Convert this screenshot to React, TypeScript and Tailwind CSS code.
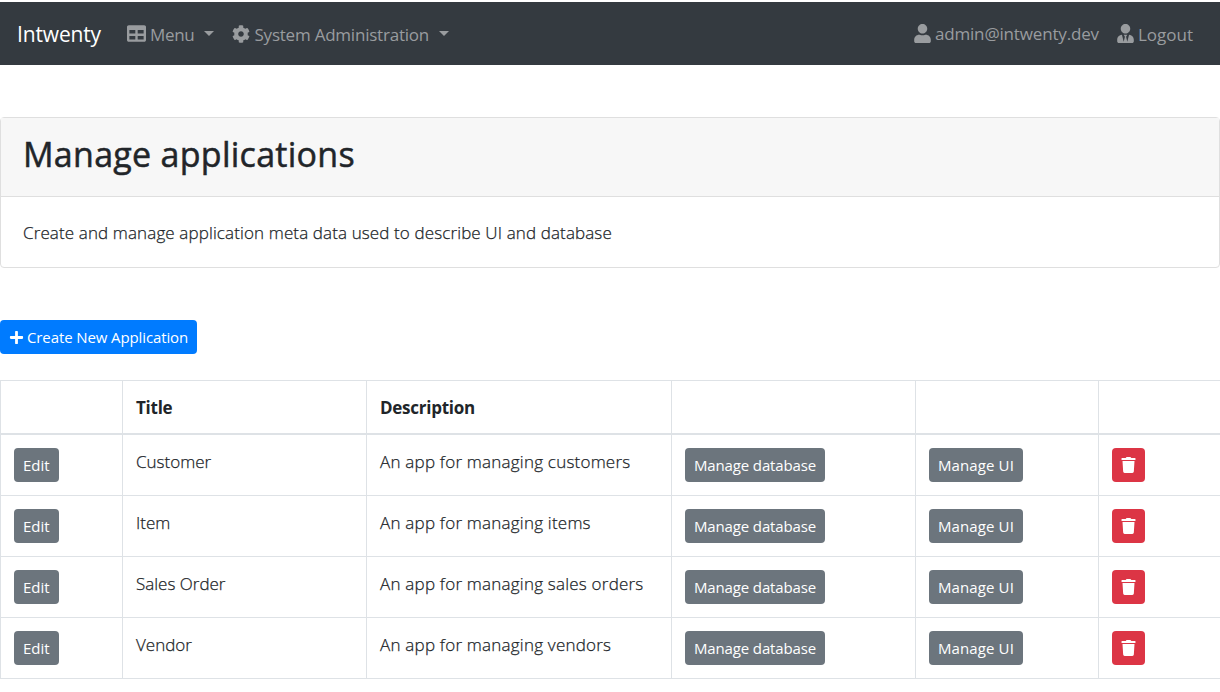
import { FaTable, FaCog, FaUser, FaUserTie, FaPlus, FaTrash } from 'react-icons/fa';

const apps = [
  { title: 'Customer', description: 'An app for managing customers' },
  { title: 'Item', description: 'An app for managing items' },
  { title: 'Sales Order', description: 'An app for managing sales orders' },
  { title: 'Vendor', description: 'An app for managing vendors' },
];

const button = 'flex h-[34px] items-center rounded-[4px] px-[9px] text-[15px] leading-[24px] text-white';
const secondary = 'bg-[#6c757d]';
const columns = 'grid grid-cols-[122px_244px_305px_244px_183px_122px] border-[#dee2e6]';
const cell = 'border-l border-[#dee2e6] px-[13px]';
const body = 'font-light [-webkit-text-stroke:0.25px_#212529]';

function Caret() {
  return <span className="ml-[10px] border-x-[5px] border-t-[5px] border-x-transparent border-t-[#999c9f]" />;
}

export default function App() {
  return (
    <div className="h-[692px] w-[1220px] overflow-hidden bg-white pt-[2px] font-['Open_Sans','Noto_Sans',sans-serif] text-[17px] text-[#212529]">
      <nav className="flex h-[63px] items-center bg-[#343a40] pl-[17px] pr-[27px] text-[#999c9f]">
        <a className="pt-[2px] text-[21px] tracking-[-0.15px] text-white">Intwenty</a>
        <a className="ml-[26px] flex items-center">
          <FaTable className="mr-[4px] size-[19px]" />
          <span className="pt-[2px] tracking-[-0.3px]">Menu</span>
          <Caret />
        </a>
        <a className="ml-[18px] flex items-center">
          <FaCog className="mr-[4px] size-[18px]" />
          <span className="pt-[2px] tracking-[-0.22px]">System Administration</span>
          <Caret />
        </a>
        <a className="ml-auto flex items-center">
          <FaUser className="mr-[4px] h-[19px] w-[17px]" />
          <span className="tracking-[-0.16px]">admin@intwenty.dev</span>
        </a>
        <a className="ml-[18px] flex items-center">
          <FaUserTie className="mr-[4px] h-[19px] w-[17px]" />
          <span className="pt-[2px]">Logout</span>
        </a>
      </nav>

      <section className="mt-[52px] h-[151px] rounded-[4px] border border-[#dfdfdf]">
        <header className="h-[79px] border-b border-[#dfdfdf] bg-[#f7f7f7] pl-[22px] pt-[12px]">
          <h1 className="text-[34px] leading-[48px] tracking-[0.28px] [-webkit-text-stroke:0.5px_#212529]">Manage applications</h1>
        </header>
        <p className={`${body} pl-[22px] pt-[23px] leading-[26px] tracking-[0.12px]`}>
          Create and manage application meta data used to describe UI and database
        </p>
      </section>

      <div className="mt-[52px] flex">
        <button className={`${button} bg-[#007bff]`}>
          <FaPlus className="mr-[3px] size-[15px]" />
          <span className="tracking-[-0.11px]">Create New Application</span>
        </button>
      </div>

      <div className="mt-[26px]">
        <div className={`${columns} h-[55px] border-b-2 border-t font-bold leading-[53px] tracking-[-0.26px]`}>
          <div className={cell} />
          <div className={cell}>Title</div>
          <div className={cell}>Description</div>
          <div className={cell} />
          <div className={cell} />
          <div className={cell} />
        </div>
        {apps.map((app) => (
          <div key={app.title} className={`${columns} h-[61px] border-b leading-[26px]`}>
            <div className={`${cell} flex pt-[13px]`}>
              <button className={`${button} ${secondary}`}>Edit</button>
            </div>
            <div className={`${cell} ${body} pt-[14px]`}>{app.title}</div>
            <div className={`${cell} ${body} pt-[14px] tracking-[0.22px]`}>{app.description}</div>
            <div className={`${cell} flex pt-[13px]`}>
              <button className={`${button} ${secondary} tracking-[-0.14px]`}>Manage database</button>
            </div>
            <div className={`${cell} flex pt-[13px]`}>
              <button className={`${button} ${secondary} tracking-[0.11px]`}>Manage UI</button>
            </div>
            <div className={`${cell} flex pt-[13px]`}>
              <button aria-label="Delete" className={`${button} bg-[#dc3545]`}>
                <FaTrash className="h-[16px] w-[15px]" />
              </button>
            </div>
          </div>
        ))}
      </div>
    </div>
  );
}
